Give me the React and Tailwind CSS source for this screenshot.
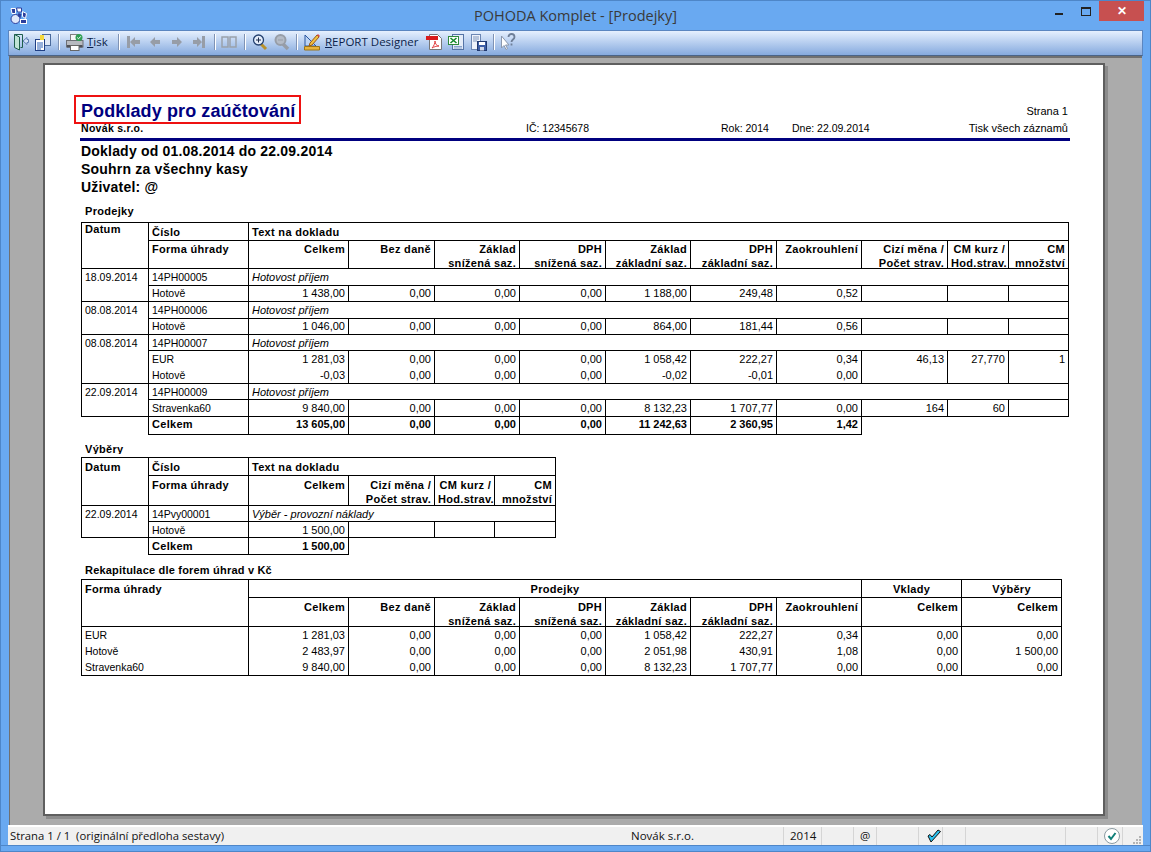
import React from 'react'

const Sep = ({ className }) => <div className={'w-[2px] h-[16px] bg-white border-l border-[#7f93b5] ' + (className || '')} />

const Exit = () => (
  <svg width="16" height="18" viewBox="0 0 16 18" fill="none">
    <path d="M1.500 1.500h8v13h-2" stroke="#1f5f4c" />
    <path d="M1.500 1.500l5 2.500v13l-5-2.500z" fill="#bfe4d6" stroke="#1f5f4c" />
    <path d="M10 8l4-3.500v2h1.500v3H14v2z" fill="#d5e3f8" stroke="#5f7fb4" />
  </svg>
)
const Copy = () => (
  <svg width="16" height="18" viewBox="0 0 16 18">
    <rect x="7.500" y="1.500" width="8" height="11" fill="#dfe8f6" stroke="#4a6a9c" />
    <rect x="0.500" y="6.500" width="9" height="11" fill="#fff" stroke="#1f3f84" />
    <path d="M2 10h6M2 12h6M2 14h6M2 16h4" stroke="#2f62b8" />
    <path d="M5 2h4v5H5z" fill="#f4d83c" />
  </svg>
)
const Printer = () => (
  <svg width="18" height="18" viewBox="0 0 18 18">
    <rect x="4.500" y="1.500" width="8" height="6" fill="#f6f6f6" stroke="#808080" />
    <rect x="0.500" y="7.500" width="16.500" height="6.500" fill="#b7bac0" stroke="#6c6f76" />
    <rect x="1" y="12" width="15.500" height="2.500" fill="#4e5158" />
    <rect x="4.500" y="12.500" width="8.500" height="5" fill="#fff" stroke="#666" />
    <circle cx="13" cy="4.500" r="3.500" fill="#2f9e54" />
    <path d="M11.200 4.500l1.300 1.300 2.300-2.500" stroke="#fff" fill="none" />
  </svg>
)
const First = () => (
  <svg width="13" height="12" viewBox="0 0 13 12" fill="#979da7">
    <path d="M0 0h3v12H0zM3 6l5-5v3h5v4H8v3z" />
  </svg>
)
const Prev = () => (
  <svg width="10" height="10" viewBox="0 0 10 10" fill="#979da7">
    <path d="M0 5l5-5v3h5v4H5v3z" />
  </svg>
)
const Next = () => (
  <svg width="10" height="10" viewBox="0 0 10 10" fill="#979da7">
    <path d="M10 5L5 0v3H0v4h5v3z" />
  </svg>
)
const Last = () => (
  <svg width="12" height="12" viewBox="0 0 12 12" fill="#979da7">
    <path d="M9 0h3v12H9zM9 6L4 1v3H0v4h4v3z" />
  </svg>
)
const Book = () => (
  <svg width="16" height="12" viewBox="0 0 16 12" fill="none" stroke="#9aa1ab" strokeWidth="1.500">
    <path d="M1 1h6v10H1zM9 1h6v10H9z" />
  </svg>
)
const ZoomPlus = () => (
  <svg width="16" height="18" viewBox="0 0 16 18">
    <path d="M9 11l5 5" stroke="#b8912c" strokeWidth="3" />
    <circle cx="6.500" cy="7" r="5" fill="#e6eefb" stroke="#24406f" strokeWidth="1.300" />
    <path d="M4 7h5M6.500 4.500v5" stroke="#1d2c4c" />
  </svg>
)
const ZoomMinus = () => (
  <svg width="16" height="18" viewBox="0 0 16 18">
    <path d="M9 11l5 5" stroke="#979da7" strokeWidth="3.500" />
    <circle cx="6.500" cy="7" r="5" fill="#b4bbc6" stroke="#979da7" strokeWidth="2" />
    <path d="M4 7h5" stroke="#979da7" />
  </svg>
)
const Ruler = () => (
  <svg width="16" height="18" viewBox="0 0 16 18">
    <path d="M1 2v11h11z" fill="#bcd3f2" stroke="#2b57a0" />
    <path d="M0.500 13.500h15v3.500H0.500z" fill="#e8b33c" stroke="#9a7418" />
    <path d="M6 10l7-8 2 2-7 8-3 1z" fill="#f0c040" stroke="#9a5a18" />
    <path d="M13 2l2 2 1-1-2-2z" fill="#d94a4a" />
  </svg>
)
const Pdf = () => (
  <svg width="16" height="18" viewBox="0 0 16 18">
    <path d="M3.500 1.500h8l4 4v11h-12z" fill="#fff" stroke="#777" />
    <rect x="0" y="3" width="12" height="4" fill="#d81a1a" />
    <path d="M6 15c2-2 3-5 3-7 0 3 2 5 4 5-3 0-5 1-7 2z" fill="none" stroke="#e04040" />
  </svg>
)
const Excel = () => (
  <svg width="16" height="18" viewBox="0 0 16 18">
    <rect x="4.500" y="1.500" width="11" height="15" fill="#e4ecf8" stroke="#5574a6" />
    <path d="M6 13.500h8M6 15h8" stroke="#8aa4cc" />
    <rect x="0.500" y="3.500" width="10" height="8" fill="#fff" stroke="#2f8a3c" />
    <path d="M2.500 5l6 5M8.500 5l-6 5" stroke="#168a2c" strokeWidth="1.600" />
  </svg>
)
const Save = () => (
  <svg width="16" height="18" viewBox="0 0 16 18">
    <rect x="0.500" y="1.500" width="9" height="15" fill="#eef2fa" stroke="#6c87b4" />
    <path d="M2 4h6M2 6h6M2 8h4" stroke="#7f95bb" />
    <rect x="6.500" y="8.500" width="9" height="9" fill="#3d5ea6" stroke="#20386e" />
    <rect x="8" y="9" width="6" height="3" fill="#fff" />
    <rect x="9" y="14" width="4" height="3.500" fill="#cfd8ea" />
  </svg>
)
const HelpArrow = () => (
  <svg width="16" height="18" viewBox="0 0 16 18">
    <path d="M1.500 3v12l2.500-2.500 2 4 1.500-1-2-3.500h3.500z" fill="#fff" stroke="#8b98ad" />
    <path d="M8.500 4c0-4 6-4 6 0 0 2.500-3 2.500-3 5M11.500 10.500v2" fill="none" stroke="#6f7f98" strokeWidth="1.800" />
  </svg>
)
const PawLogo = () => (
  <svg width="17" height="17" viewBox="0 0 17 17">
    <path d="M1 1.500h4.500v5H2z" fill="#2c3f9e" stroke="#fff" />
    <path d="M6.500 1h5v4h-4z" fill="#ffffff" stroke="#2c3f9e" />
    <path d="M12.500 4.500l4 2-1 5-3-2z" fill="#2c3f9e" stroke="#fff" />
    <circle cx="5.500" cy="12" r="4.500" fill="#dfe8fb" stroke="#2c3f9e" />
    <rect x="10.500" y="12.500" width="6" height="4" fill="#2c3f9e" stroke="#fff" />
    <path d="M8.500 6l3 1-1 4-3-2z" fill="#2c3f9e" />
  </svg>
)
const CheckBlue = () => (
  <svg width="14" height="14" viewBox="0 0 14 14">
    <path d="M1 7l3 6L13.500 2.500 11 1 5 8 3 5.500z" fill="#29c0ee" stroke="#111" />
  </svg>
)
const CheckRound = () => (
  <svg width="16" height="16" viewBox="0 0 16 16">
    <circle cx="8" cy="8" r="7.500" fill="#fff" stroke="#8a9aa0" />
    <path d="M4.500 8l2.500 3 4.500-6" fill="none" stroke="#0f7f78" strokeWidth="2" />
  </svg>
)
const Grip = () => (
  <svg width="9" height="9" viewBox="0 0 9 9" fill="#b4b4b4">
    <path d="M7 1h2v2H7zM4 4h2v2H4zM7 4h2v2H7zM1 7h2v2H1zM4 7h2v2H4zM7 7h2v2H7z" />
  </svg>
)

// rows of the sales table: form, amounts up to CM mnozstvi
const sales = [
  { date: '18.09.2014', no: '14PH00005', head: 'h-[17px]', line: ['h-[16px]'], lines: [['Hotově', '1 438,00', '0,00', '0,00', '0,00', '1 188,00', '249,48', '0,52', '', '', '']] },
  { date: '08.08.2014', no: '14PH00006', head: 'h-[17px]', line: ['h-[16px]'], lines: [['Hotově', '1 046,00', '0,00', '0,00', '0,00', '864,00', '181,44', '0,56', '', '', '']] },
  {
    date: '08.08.2014',
    no: '14PH00007',
    head: 'h-[16px]',
    line: ['h-[17px]', 'h-[16px]'],
    lines: [
      ['EUR', '1 281,03', '0,00', '0,00', '0,00', '1 058,42', '222,27', '0,34', '46,13', '27,770', '1'],
      ['Hotově', '-0,03', '0,00', '0,00', '0,00', '-0,02', '-0,01', '0,00', '', '', ''],
    ],
  },
  { date: '22.09.2014', no: '14PH00009', head: 'h-[16px]', line: ['h-[17px]'], lines: [['Stravenka60', '9 840,00', '0,00', '0,00', '0,00', '8 132,23', '1 707,77', '0,00', '164', '60', '']] },
]

const recap = [
  ['EUR', '1 281,03', '0,00', '0,00', '0,00', '1 058,42', '222,27', '0,34', '0,00', '0,00'],
  ['Hotově', '2 483,97', '0,00', '0,00', '0,00', '2 051,98', '430,91', '1,08', '0,00', '1 500,00'],
  ['Stravenka60', '9 840,00', '0,00', '0,00', '0,00', '8 132,23', '1 707,77', '0,00', '0,00', '0,00'],
]

const td = 'border border-black px-[3px] py-0 align-middle overflow-hidden whitespace-nowrap leading-[14px]'
const num = td + ' text-right'
const small = td + ' text-[10.5px]'
const bold = 'font-bold tracking-[0.3px]'
const th = td + ' text-left ' + bold

const Cols = ({ widths }) => (
  <colgroup>
    {widths.map((w, i) => <col key={i} style={{ width: w }} />)}
  </colgroup>
)

// header cell with up to two lines; the second one sits close above the rule
const Head = ({ a, b, low }) => (
  <th className={num + ' ' + bold + ' !align-top ' + (low ? 'pt-[2px]' : 'pt-[1px]')}>
    <div className="h-[26px]">
      {a}
      <br />
      {b}
    </div>
  </th>
)

const SalesTable = () => (
  <table className="border-collapse table-fixed w-[987px] text-[11px] text-black">
    <Cols widths={[67, 100, 100, 86, 85, 86, 85, 86, 85, 86, 61, 60]} />
    <tbody>
      <tr className="h-[18px]">
        <th rowSpan={2} className={th + ' !align-top !leading-[12px]'}>Datum</th>
        <th className={th}>Číslo</th>
        <th colSpan={10} className={th}>Text na dokladu</th>
      </tr>
      <tr className="h-[28px]">
        <th className={th + ' !align-top pt-[1px]'}>Forma úhrady</th>
        <Head a="Celkem" />
        <Head a="Bez daně" />
        <Head a="Základ" b="snížená saz." />
        <Head a="DPH" b="snížená saz." />
        <Head a="Základ" b="základní saz." />
        <Head a="DPH" b="základní saz." />
        <Head a="Zaokrouhlení" />
        <Head a="Cizí měna /" b="Počet strav." />
        <Head a="CM kurz /" b="Hod.strav." />
        <Head a="CM" b="množství" />
      </tr>
      {sales.map((s) => (
        <React.Fragment key={s.no}>
          <tr className={s.head}>
            <td rowSpan={1 + s.lines.length} className={small + ' !align-top pt-[1px]'}>{s.date}</td>
            <td className={small}>{s.no}</td>
            <td colSpan={10} className={td + ' italic'}>Hotovost příjem</td>
          </tr>
          {s.lines.map((l, i) => (
            <tr key={i} className={s.line[i]}>
              {l.map((v, j) => (
                <td
                  key={j}
                  className={
                    (j === 0 ? small : num) +
                    (s.lines.length > 1 ? (i === 0 ? ' border-b-0' : ' border-t-0') : '') +
                    ' pb-[1px]'
                  }
                >
                  {v}
                </td>
              ))}
            </tr>
          ))}
        </React.Fragment>
      ))}
      <tr className="h-[18px]">
        <td />
        <td className={td + ' pb-[3px] ' + bold}>Celkem</td>
        {['13 605,00', '0,00', '0,00', '0,00', '11 242,63', '2 360,95', '1,42'].map((v, i) => (
          <td key={i} className={num + ' pb-[3px] font-bold'}>{v}</td>
        ))}
      </tr>
    </tbody>
  </table>
)

const WithdrawTable = () => (
  <table className="border-collapse table-fixed w-[474px] text-[11px] text-black">
    <Cols widths={[67, 100, 100, 86, 60, 61]} />
    <tbody>
      <tr className="h-[18px]">
        <th rowSpan={2} className={th + ' !align-top pt-[2px]'}>Datum</th>
        <th className={th}>Číslo</th>
        <th colSpan={4} className={th}>Text na dokladu</th>
      </tr>
      <tr className="h-[30px]">
        <th className={th + ' !align-top pt-[2px]'}>Forma úhrady</th>
        <Head low a="Celkem" />
        <Head low a="Cizí měna /" b="Počet strav." />
        <Head low a="CM kurz /" b="Hod.strav." />
        <Head low a="CM" b="množství" />
      </tr>
      <tr className="h-[16px]">
        <td rowSpan={2} className={small + ' !align-top pt-[1px]'}>22.09.2014</td>
        <td className={small}>14Pvy00001</td>
        <td colSpan={4} className={td + ' italic'}>Výběr - provozní náklady</td>
      </tr>
      <tr className="h-[16px]">
        <td className={small}>Hotově</td>
        <td className={num}>1 500,00</td>
        <td className={td} />
        <td className={td} />
        <td className={td} />
      </tr>
      <tr className="h-[17px]">
        <td />
        <td className={td + ' ' + bold}>Celkem</td>
        <td className={num + ' font-bold'}>1 500,00</td>
        <td colSpan={3} />
      </tr>
    </tbody>
  </table>
)

const RecapTable = () => (
  <table className="border-collapse table-fixed w-[980px] text-[11px] text-black">
    <Cols widths={[167, 100, 86, 85, 86, 85, 86, 85, 100, 100]} />
    <tbody>
      <tr className="h-[18px]">
        <th rowSpan={2} className={th + ' !align-top pt-[2px]'}>Forma úhrady</th>
        <th colSpan={7} className={td + ' text-center ' + bold}>Prodejky</th>
        <th className={td + ' text-center ' + bold}>Vklady</th>
        <th className={td + ' text-center ' + bold}>Výběry</th>
      </tr>
      <tr className="h-[29px]">
        <Head low a="Celkem" />
        <Head low a="Bez daně" />
        <Head low a="Základ" b="snížená saz." />
        <Head low a="DPH" b="snížená saz." />
        <Head low a="Základ" b="základní saz." />
        <Head low a="DPH" b="základní saz." />
        <Head low a="Zaokrouhlení" />
        <Head low a="Celkem" />
        <Head low a="Celkem" />
      </tr>
      {recap.map((r, i) => (
        <tr key={i} className={i === 2 ? 'h-[17px]' : 'h-[16px]'}>
          {r.map((v, j) => (
            <td
              key={j}
              className={
                (j === 0 ? small : num) +
                (i === 0 ? ' border-b-0' : i === 2 ? ' border-t-0' : ' border-y-0')
              }
            >
              {v}
            </td>
          ))}
        </tr>
      ))}
    </tbody>
  </table>
)

const Label = ({ children, className }) => (
  <div className={'ml-[4px] text-[11px] leading-[14px] whitespace-nowrap ' + bold + ' ' + (className || '')}>{children}</div>
)

export default function App() {
  return (
    <div className="w-[1151px] h-[852px] overflow-hidden bg-[#69a9f1] border border-[#4e86c8] flex flex-col font-['Liberation_Sans',Arial,sans-serif]">
      {/* title bar */}
      <div className="h-[29px] shrink-0 flex items-start relative">
        <div className="ml-[9px] mt-[6px]"><PawLogo /></div>
        <div className="absolute left-0 right-0 top-[6px] text-center text-[14.5px] leading-[18px] text-[#3a3a3a] font-['Open_Sans',sans-serif]">
          POHODA Komplet - [Prodejky]
        </div>
        <div className="ml-auto flex items-start mr-[6px]">
          <div className="w-[8px] h-[2px] bg-[#222] mt-[12px] mr-[18px]" />
          <div className="w-[10px] h-[9px] border border-[#222] border-t-2 mt-[6px] mr-[8px]" />
          <div className="w-[45px] h-[20px] bg-[#c75050] flex items-center justify-center text-white font-bold text-[12px]">✕</div>
        </div>
      </div>

      {/* toolbar */}
      <div className="h-[26px] mx-[7px] shrink-0 flex items-center pb-[2px] pl-[4px] border border-[#5b86c0] border-b-[#4a6488] bg-gradient-to-b from-[#e6f0fe] to-[#86aade] text-[11.5px] text-[#0b1f4a] font-['Open_Sans',sans-serif] whitespace-nowrap">
        <Exit />
        <div className="ml-[6px]"><Copy /></div>
        <Sep className="ml-[7px]" />
        <div className="ml-[6px]"><Printer /></div>
        <span className="ml-[3px] w-[31px]"><u>T</u>isk</span>
        <Sep />
        <div className="ml-[7px]"><First /></div>
        <div className="ml-[10px]"><Prev /></div>
        <div className="ml-[12px]"><Next /></div>
        <div className="ml-[11px]"><Last /></div>
        <Sep className="ml-[9px]" />
        <div className="ml-[5px]"><Book /></div>
        <Sep className="ml-[7px]" />
        <div className="ml-[6px]"><ZoomPlus /></div>
        <div className="ml-[6px]"><ZoomMinus /></div>
        <Sep className="ml-[6px]" />
        <div className="ml-[6px]"><Ruler /></div>
        <span className="ml-[5px] w-[101px]"><u>R</u>EPORT Designer</span>
        <Pdf />
        <div className="ml-[6px]"><Excel /></div>
        <div className="ml-[7px]"><Save /></div>
        <Sep className="ml-[6px]" />
        <div className="ml-[5px]"><HelpArrow /></div>
      </div>

      {/* preview area */}
      <div className="h-[769px] shrink-0 mx-[8px] bg-[#ababab] border-t-2 border-l border-[#707070] pt-[5px] pl-[33px]">
        <div className="w-[1062px] h-[753px] bg-white border-2 border-[#5f5f5f] shadow-[3px_3px_0_#8c8c8c] relative text-black">
          <div className="absolute left-[29px] top-[30px] w-[227px] h-[29px] border-2 border-[#ee1111]" />

          <div className="ml-[36px] w-[987px] pt-[36px]">
            <div className="flex items-center h-[20px] justify-between">
              <span className="text-[18px] font-bold text-[#00007f] leading-[20px] tracking-[0.1px]">Podklady pro zaúčtování</span>
              <span className="text-[11px] leading-[14px]">Strana 1</span>
            </div>
            <div className="flex h-[14px] text-[10.5px] leading-[14px] whitespace-nowrap">
              <span className="w-[445px] font-bold tracking-[0.3px]">Novák s.r.o.</span>
              <span className="w-[195px]">IČ: 12345678</span>
              <span className="w-[71px]">Rok: 2014</span>
              <span>Dne: 22.09.2014</span>
              <span className="ml-auto text-[11px]">Tisk všech záznamů</span>
            </div>
          </div>
          <div className="ml-[35px] w-[990px] h-[3px] mt-[3px] bg-[#00007f]" />

          <div className="ml-[36px] mt-[1px] text-[14px] leading-[18px] font-bold tracking-[0.2px]">
            <div>Doklady od 01.08.2014 do 22.09.2014</div>
            <div>Souhrn za všechny kasy</div>
            <div>Uživatel: @</div>
          </div>

          <div className="ml-[36px] mt-[8px]">
            <Label>Prodejky</Label>
            <div className="mt-[4px]"><SalesTable /></div>
            <Label className="mt-[7px] h-[12px] overflow-hidden">Výběry</Label>
            <div className="mt-[3px]"><WithdrawTable /></div>
            <Label className="mt-[8px] !tracking-[0.2px]">Rekapitulace dle forem úhrad v Kč</Label>
            <div className="mt-[2px]"><RecapTable /></div>
          </div>
        </div>
      </div>

      {/* status bar */}
      <div className="h-[20px] mx-[7px] shrink-0 bg-[#f0f0f0] border-t-2 border-white flex text-[11.5px] leading-[18px] text-[#111] font-['Open_Sans',sans-serif] whitespace-nowrap">
        <div className="w-[776px] flex border-r border-[#d5d5d5]">
          <span className="ml-[2px] w-[621px] text-[11.3px]">Strana 1 / 1&nbsp; (originální předloha sestavy)</span>
          <span>Novák s.r.o.</span>
        </div>
        <div className="w-[38px] pl-[6px] border-r border-[#d5d5d5]">2014</div>
        <div className="w-[32px] border-r border-[#d5d5d5]" />
        <div className="w-[23px] pl-[6px] border-r border-[#d5d5d5]">@</div>
        <div className="w-[42px] border-r border-[#d5d5d5]" />
        <div className="w-[24px] pl-[8px] pt-[2px] border-r border-[#d5d5d5]"><CheckBlue /></div>
        <div className="w-[23px] border-r border-[#d5d5d5]" />
        <div className="w-[100px] border-r border-[#d5d5d5]" />
        <div className="w-[32px] border-r border-[#d5d5d5]" />
        <div className="w-[25px] pl-[6px] pt-[1px] border-r border-[#d5d5d5]"><CheckRound /></div>
        <div className="flex-1 flex justify-end items-end pr-[2px] pb-[1px]"><Grip /></div>
      </div>
      <div className="flex-1 border-t border-[#4e86c8]" />
    </div>
  )
}
